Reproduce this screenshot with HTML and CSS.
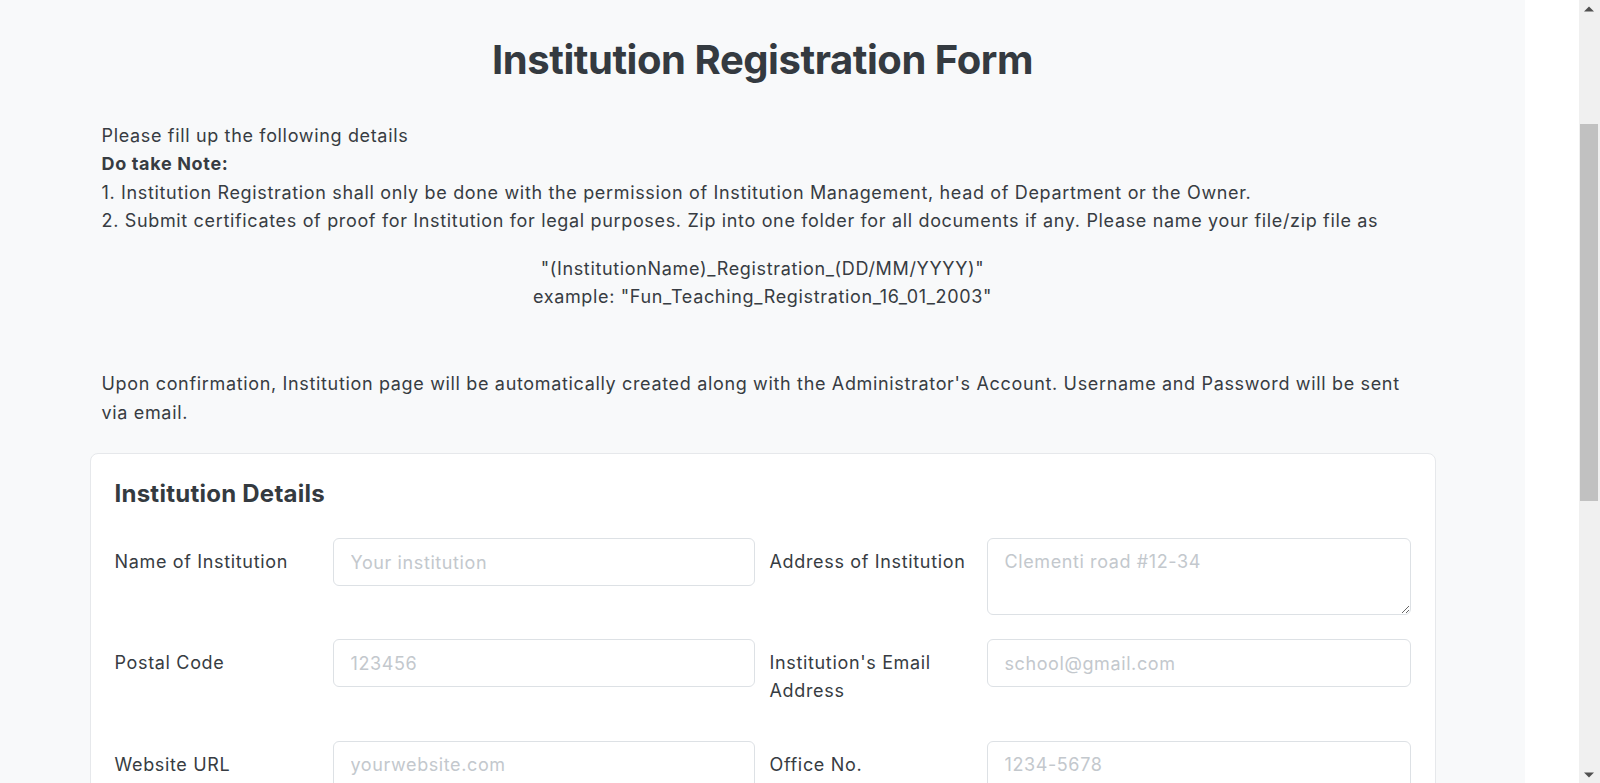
FILE: index.html
```html
<!DOCTYPE html>
<html lang="en">
<head>
<meta charset="utf-8">
<title>Institution Registration Form</title>
<link rel="stylesheet" href="styles.css">
</head>
<body>
<div class="layout">
  <main class="main">
    <div class="container">
      <h1 class="page-title">Institution Registration Form</h1>
      <div class="intro">
        <p class="notes">Please fill up the following details<br>
        <strong>Do take Note:</strong><br>
        1. Institution Registration shall only be done with the permission of Institution Management, head of Department or the Owner.<br>
        2. Submit certificates of proof for Institution for legal purposes. Zip into one folder for all documents if any. Please name your file/zip file as</p>
        <p class="naming">"(InstitutionName)_Registration_(DD/MM/YYYY)"<br>example: "Fun_Teaching_Registration_16_01_2003"</p>
        <p class="confirm">Upon confirmation, Institution page will be automatically created along with the Administrator's Account. Username and Password will be sent via email.</p>
      </div>

      <section class="card">
        <h4 class="card-title">Institution Details</h4>
        <div class="form-grid">
          <label class="field-label">Name of Institution</label>
          <input class="field-input" type="text" placeholder="Your institution">
          <label class="field-label">Address of Institution</label>
          <textarea class="field-input field-area" placeholder="Clementi road #12-34"></textarea>

          <label class="field-label">Postal Code</label>
          <input class="field-input" type="text" placeholder="123456">
          <label class="field-label">Institution's Email Address</label>
          <input class="field-input" type="email" placeholder="school@gmail.com">

          <label class="field-label">Website URL</label>
          <input class="field-input" type="text" placeholder="yourwebsite.com">
          <label class="field-label">Office No.</label>
          <input class="field-input" type="text" placeholder="1234-5678">

          <label class="field-label">Documents</label>
          <input class="field-input" type="text" placeholder="Upload zip file">
          <label class="field-label">Type of Institution</label>
          <input class="field-input" type="text" placeholder="Tuition centre">
        </div>
      </section>

      <section class="card">
        <h4 class="card-title">Administrator Details</h4>
        <div class="form-grid">
          <label class="field-label">Full Name</label>
          <input class="field-input" type="text" placeholder="John Tan">
          <label class="field-label">Email Address</label>
          <input class="field-input" type="email" placeholder="admin@gmail.com">

          <label class="field-label">Contact No.</label>
          <input class="field-input" type="text" placeholder="9123-4567">
          <label class="field-label">Position</label>
          <input class="field-input" type="text" placeholder="Principal">
        </div>
      </section>

      <div class="actions">
        <button class="submit-btn" type="button">Submit</button>
      </div>
    </div>
  </main>
  <div class="side"></div>
  <div class="scrollbar" aria-hidden="true">
    <div class="sb-button">
      <svg width="10" height="6" viewBox="0 0 10 6"><polygon points="0,5.5 5,0.5 10,5.5" fill="#505050"/></svg>
    </div>
    <div class="sb-track">
      <div class="sb-gap"></div>
      <div class="sb-thumb"></div>
    </div>
    <div class="sb-button">
      <svg width="10" height="6" viewBox="0 0 10 6"><polygon points="0,0.5 10,0.5 5,5.5" fill="#505050"/></svg>
    </div>
  </div>
</div>
</body>
</html>
```

FILE: styles.css
```css
html, body {
  margin: 0;
  padding: 0;
  height: 100%;
  overflow: hidden;
  background: #ffffff;
}

body {
  font-family: Inter, "Noto Sans", "Liberation Sans", sans-serif;
  font-size: 18px;
  line-height: 28.4px;
  letter-spacing: 0.66px;
  color: #373c42;
}

.layout {
  display: grid;
  grid-template-columns: 1525px 1fr 21px;
  height: 100vh;
  overflow: hidden;
}

.main {
  background: #f8f9fa;
  padding-bottom: 250px;
  overflow: hidden;
}

.side {
  background: #ffffff;
}

/* window scrollbar */
.scrollbar {
  display: flex;
  flex-direction: column;
  background: #f0f0f0;
  height: 100vh;
}

.sb-button {
  height: 17px;
  flex: none;
  display: flex;
  align-items: center;
  justify-content: center;
  padding-right: 1px;
}

.sb-track {
  flex: 1;
  display: flex;
  flex-direction: column;
  padding: 0 2px 0 1px;
}

.sb-gap {
  height: 107px;
  flex: none;
}

.sb-thumb {
  height: 377px;
  flex: none;
  background: #c1c1c1;
}

.container {
  width: 1346px;
  margin: 0 auto;
}

.page-title {
  margin: 36px 0 38px;
  font-size: 40px;
  line-height: 48px;
  font-weight: 700;
  letter-spacing: -0.45px;
  text-align: center;
  color: #343a40;
}

.intro {
  padding: 0 12px;
}

.intro p {
  margin: 0;
}

.notes strong {
  font-weight: 700;
}

.intro .naming {
  margin-top: 19px;
  text-align: center;
}

.intro .confirm {
  margin-top: 59px;
}

.card {
  margin-top: 26px;
  background: #ffffff;
  border: 1px solid #e6e8eb;
  border-radius: 8px;
  padding: 26px 24px 30px;
}

.card-title {
  margin: 0 0 29px;
  font-size: 24px;
  line-height: 28.8px;
  font-weight: 700;
  letter-spacing: 0.25px;
  color: #343a40;
}

.form-grid {
  display: grid;
  grid-template-columns: 203px 422px 202px 1fr;
  column-gap: 15px;
  row-gap: 24px;
  align-items: start;
}

.field-label {
  padding: 10px 0 11px;
  color: #373c42;
}

.field-input {
  box-sizing: border-box;
  height: 48px;
  width: 100%;
  margin: 0;
  padding: 0 17px;
  border: 1px solid #dde1e5;
  border-radius: 6px;
  background: #ffffff;
  font-family: Inter, "Noto Sans", "Liberation Sans", sans-serif;
  font-size: 18px;
  line-height: 28.4px;
  letter-spacing: 0.6px;
  color: #373c42;
  outline: none;
}

.field-area {
  height: 77px;
  padding: 9px 17px;
  resize: vertical;
  display: block;
}

.field-input::placeholder {
  color: #c3c8cd;
  opacity: 1;
}

.actions {
  margin-top: 30px;
  display: flex;
  justify-content: center;
}

.submit-btn {
  font-family: Inter, "Noto Sans", "Liberation Sans", sans-serif;
  font-size: 18px;
  padding: 10px 40px;
  border: none;
  border-radius: 6px;
  background: #0d6efd;
  color: #ffffff;
}
```
